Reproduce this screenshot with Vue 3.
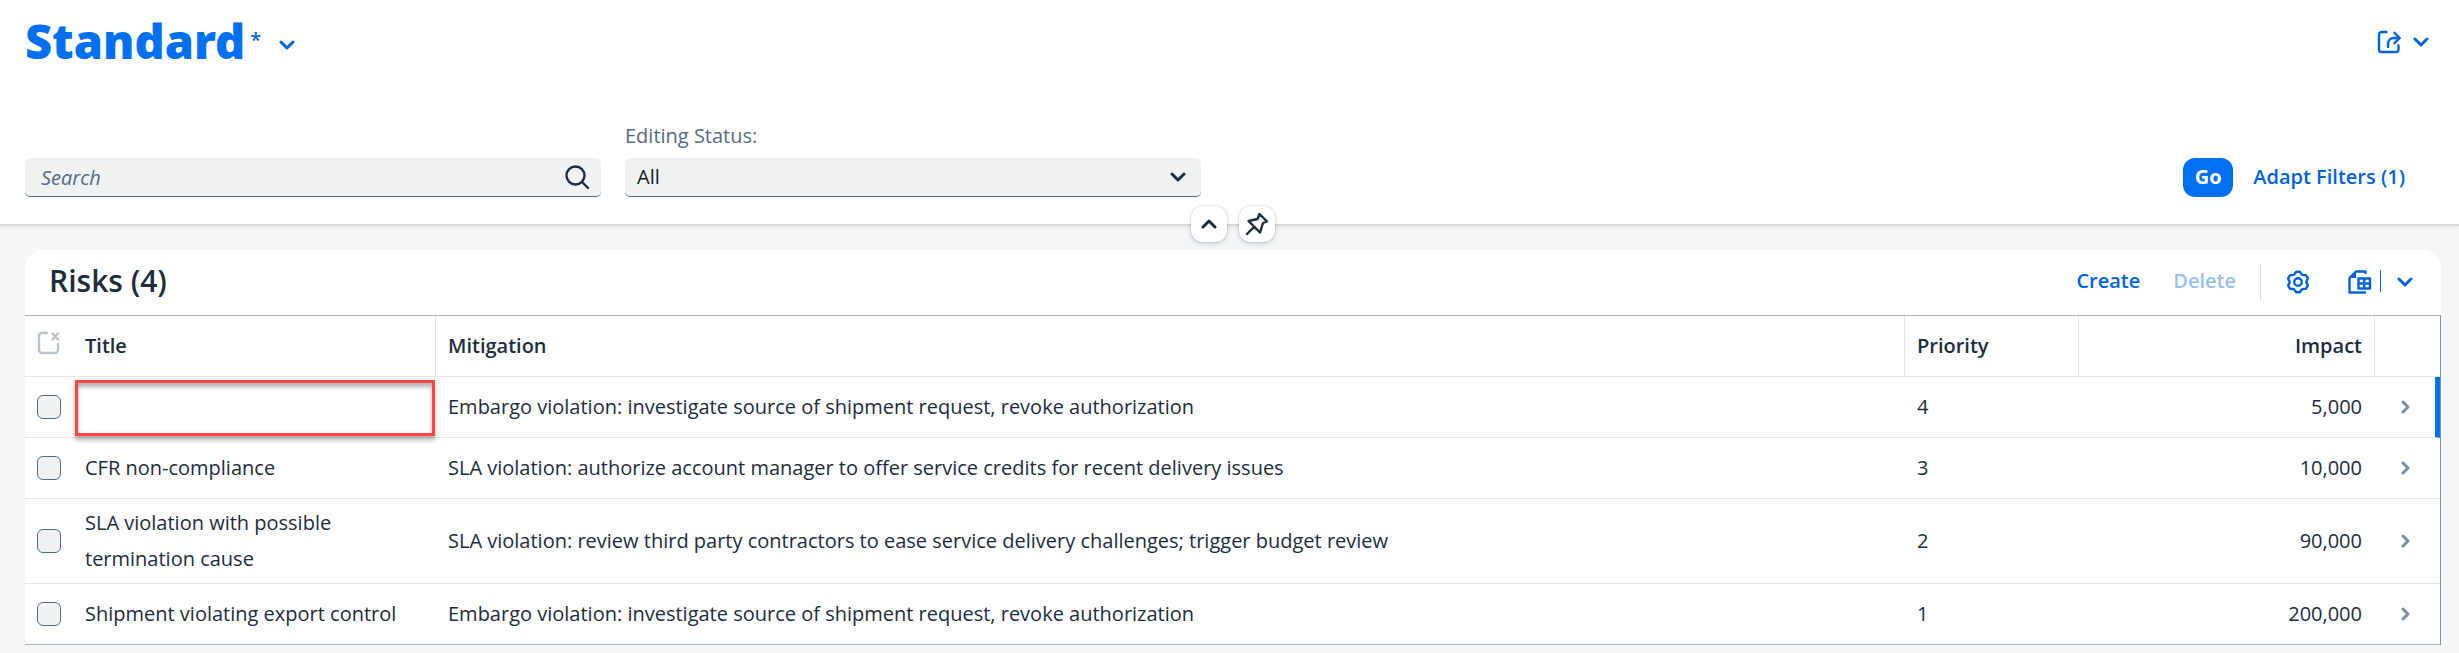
<script setup>
import { ref } from 'vue'

const search = ref('')
const status = ref('All')
const risks = ref([
  { id: 1, title: '', mitigation: 'Embargo violation: investigate source of shipment request, revoke authorization', priority: 4, impact: '5,000', invalid: true, current: true, selected: false },
  { id: 2, title: 'CFR non-compliance', mitigation: 'SLA violation: authorize account manager to offer service credits for recent delivery issues', priority: 3, impact: '10,000', selected: false },
  { id: 3, title: 'SLA violation with possible termination cause', mitigation: 'SLA violation: review third party contractors to ease service delivery challenges; trigger budget review', priority: 2, impact: '90,000', selected: false },
  { id: 4, title: 'Shipment violating export control', mitigation: 'Embargo violation: investigate source of shipment request, revoke authorization', priority: 1, impact: '200,000', selected: false },
])
</script>

<template>
  <div class="page">
    <header class="header">
      <div class="title-row">
        <div class="variant">
          <h1>Standard</h1>
          <span class="dirty">*</span>
          <button class="icon-btn variant-btn" aria-label="Select view">
            <svg width="16" height="10" viewBox="0 0 16 10"><path class="stroke bold" d="M2 2l6 6 6-6" /></svg>
          </button>
        </div>
        <div class="share">
          <button class="icon-btn" aria-label="Share">
            <svg width="24" height="24" viewBox="0 0 24 24">
              <path class="stroke" d="M9.500 2H4.500a2.500 2.500 0 0 0-2.500 2.500v15a2.500 2.500 0 0 0 2.500 2.500h14.500a2.500 2.500 0 0 0 2.500-2.500v-4" />
              <path class="stroke" d="M11 17v-3c0-3.500 2.500-6 6-6h5M17.500 2.800L22.700 8l-5.200 5.200" />
            </svg>
          </button>
          <button class="icon-btn" aria-label="More sharing options">
            <svg width="16" height="10" viewBox="0 0 16 10"><path class="stroke bold" d="M2 2l6 6 6-6" /></svg>
          </button>
        </div>
      </div>

      <form class="filters" @submit.prevent>
        <div class="field">
          <div class="control">
            <input v-model="search" type="text" placeholder="Search" aria-label="Search" />
            <button class="icon-btn dark" type="button" aria-label="Run search">
              <svg width="26" height="26" viewBox="0 0 26 26"><circle class="stroke" cx="11.500" cy="11.500" r="9" /><path class="stroke" d="M18 18l6 6" /></svg>
            </button>
          </div>
        </div>
        <div class="field">
          <label for="status">Editing Status:</label>
          <div class="control">
            <select id="status" v-model="status"><option>All</option></select>
            <svg class="dark select-arrow" width="16" height="10" viewBox="0 0 16 10"><path class="stroke bold" d="M2 2l6 6 6-6" /></svg>
          </div>
        </div>
        <div class="actions">
          <button class="go" type="submit">Go</button>
          <button class="text-btn" type="button">Adapt Filters (1)</button>
        </div>
      </form>

      <div class="toggles">
        <button class="toggle" aria-label="Collapse header">
          <svg width="16" height="10" viewBox="0 0 16 10"><path class="stroke bold" d="M2 8l6-6 6 6" /></svg>
        </button>
        <button class="toggle" aria-label="Pin header">
          <svg width="24" height="24" viewBox="0 0 24 24"><path class="stroke" d="M14.500 2l7.500 7.500-4 1.500-3 9.500L3.500 9l9-2zM9 15l-7 7" /></svg>
        </button>
      </div>
    </header>

    <main class="card">
      <div class="toolbar">
        <h2>Risks (4)</h2>
        <button class="text-btn create">Create</button>
        <button class="text-btn delete" disabled>Delete</button>
        <span class="divider"></span>
        <button class="icon-btn settings" aria-label="Settings">
          <svg width="24" height="24" viewBox="0 0 24 24">
            <path class="stroke" d="M10.200 1.700h3.600l2.300 3.200 3.900.4 1.900 3.100-1.700 3.600 1.700 3.600-1.900 3.100-3.900.4-2.300 3.200h-3.600l-2.300-3.200-3.900-.4-1.900-3.100 1.700-3.600-1.700-3.600 1.900-3.100 3.900-.4z" />
            <circle class="stroke" cx="12" cy="12" r="3.800" />
          </svg>
        </button>
        <button class="icon-btn" aria-label="Export to spreadsheet">
          <svg width="24" height="24" viewBox="0 0 24 24">
            <path class="stroke" d="M17.500 3V1.500H8L1.500 8v14.500H17" />
            <path class="fill" d="M8 1v7H1z" />
            <path class="stroke" d="M10.500 8.500h11.500v10h-11.500zM16.200 8.500v10M10.500 13.500h11.500" />
          </svg>
        </button>
        <span class="split"></span>
        <button class="icon-btn" aria-label="Export options">
          <svg width="16" height="10" viewBox="0 0 16 10"><path class="stroke bold" d="M2 2l6 6 6-6" /></svg>
        </button>
      </div>

      <table>
        <colgroup>
          <col class="c-check" /><col class="c-title" /><col /><col class="c-priority" /><col class="c-impact" /><col class="c-nav" />
        </colgroup>
        <thead>
          <tr>
            <th class="check">
              <button class="icon-btn clear" aria-label="Deselect all">
                <svg width="24" height="24" viewBox="0 0 24 24"><path class="stroke" d="M10 2H5a3 3 0 0 0-3 3v14a3 3 0 0 0 3 3h13a3 3 0 0 0 3-3v-6M15.500 2.500l5.500 6M21 2.500l-5.500 6" /></svg>
              </button>
            </th>
            <th class="sep">Title</th>
            <th class="sep">Mitigation</th>
            <th class="sep">Priority</th>
            <th class="sep num">Impact</th>
            <th></th>
          </tr>
        </thead>
        <tbody>
          <tr v-for="r in risks" :key="r.id">
            <td class="check"><input v-model="r.selected" type="checkbox" :aria-label="'Select row ' + r.id" /></td>
            <td class="title-cell">{{ r.title }}<span v-if="r.invalid" class="marker"></span></td>
            <td>{{ r.mitigation }}</td>
            <td>{{ r.priority }}</td>
            <td class="num">{{ r.impact }}</td>
            <td class="nav" :class="{ current: r.current }">
              <button class="icon-btn go-to" :aria-label="'Open row ' + r.id">
                <svg width="10" height="14" viewBox="0 0 10 14"><path class="stroke bold" d="M2 2l5 5-5 5" /></svg>
              </button>
            </td>
          </tr>
        </tbody>
      </table>
    </main>
  </div>
</template>

<style>
body {
  background: #f5f6f7;
}
</style>

<style scoped>
.page {
  font-family: "Open Sans", "Noto Sans", sans-serif;
  font-size: 20px;
  line-height: 24px;
  color: #1d2d3e;
}
button, input, select {
  font: inherit;
  color: inherit;
  margin: 0;
}
button {
  border: 0;
  padding: 0;
  background: none;
}
svg {
  display: block;
}
.stroke {
  fill: none;
  stroke: currentColor;
  stroke-width: 2.4;
  stroke-linecap: round;
  stroke-linejoin: round;
}
.stroke.bold {
  stroke-width: 3;
}
.fill {
  fill: currentColor;
}
.icon-btn {
  color: #0064d9;
}
.dark {
  color: #1d2d3e;
}

.header {
  position: relative;
  background: #fff;
  padding: 14px 18px 27px 25px;
  border-bottom: 2px solid #d9dadc;
  box-shadow: 0 2px 4px rgba(34, 53, 72, 0.06);
}
.title-row {
  display: flex;
  justify-content: space-between;
  height: 56px;
}
.variant {
  display: flex;
}
h1 {
  margin: 0;
  font-family: "Noto Sans", "Open Sans", sans-serif;
  font-size: 47px;
  font-weight: 900;
  line-height: 54px;
  color: #0070f2;
}
.dirty {
  margin-left: 5px;
  line-height: 52px;
  font-weight: 600;
  color: #0064d9;
}
.variant-btn {
  margin: 6px 0 0 18px;
}
.share {
  display: flex;
  align-items: center;
  gap: 12px;
  padding-right: 12px;
  height: 56px;
}
.filters {
  display: flex;
  align-items: flex-end;
  gap: 24px;
  margin-top: 54px;
}
.field {
  flex: 0 1 576px;
}
.field label {
  display: block;
  color: #556b82;
  margin-bottom: 10px;
}
.control {
  display: flex;
  align-items: center;
  height: 39px;
  box-sizing: border-box;
  background: #eff1f2;
  border-bottom: 1px solid #556b82;
  border-radius: 5px;
  padding-right: 11px;
}
.control input {
  flex: 1;
  min-width: 0;
  height: 36px;
  padding: 0 16px;
  border: 0;
  background: none;
}
.control input::placeholder {
  color: #556b82;
  font-style: italic;
  opacity: 1;
}
.control select {
  flex: 1;
  height: 36px;
  padding: 0 12px;
  border: 0;
  background: none;
  appearance: none;
  color: #131e29;
}
.select-arrow {
  margin-right: 4px;
}
.actions {
  display: flex;
  align-items: center;
  gap: 20px;
  margin-left: auto;
  padding-right: 36px;
  height: 39px;
}
.go {
  width: 50px;
  height: 39px;
  padding-bottom: 2px;
  border-radius: 12px;
  background: #0070f2;
  color: #fff;
  font-weight: 700;
}
.text-btn {
  padding-bottom: 2px;
  color: #0064d9;
  font-weight: 600;
}
.toggles {
  position: absolute;
  left: 25px;
  right: 18px;
  bottom: -18px;
  display: flex;
  justify-content: center;
  gap: 12px;
}
.toggle {
  display: flex;
  align-items: center;
  justify-content: center;
  width: 36px;
  height: 36px;
  border-radius: 12px;
  background: #fff;
  box-shadow: 0 0 2px rgba(34, 53, 72, 0.25), 0 2px 5px rgba(34, 53, 72, 0.18);
}

.card {
  margin: 24px 18px 7px 25px;
  background: #fff;
  border-radius: 18px 18px 0 0;
}
.toolbar {
  display: flex;
  align-items: center;
  height: 65px;
  box-sizing: border-box;
  padding: 0 28px 1px 24px;
}
h2 {
  margin: 0 auto 0 0;
  padding-bottom: 2px;
  font-size: 30px;
  font-weight: 600;
  line-height: 36px;
}
.create {
  margin-right: 33px;
}
.delete {
  opacity: 0.4;
}
.divider {
  width: 1px;
  height: 36px;
  margin: 0 25px 0 24px;
  background: #d9d9d9;
}
.settings {
  margin-right: 38px;
}
.split {
  width: 1px;
  height: 22px;
  margin: 0 16px 2px 8px;
  background: #0064d9;
}

table {
  width: 100%;
  table-layout: fixed;
  border-collapse: separate;
  border-spacing: 0;
  border-top: 1px solid #a8b3bd;
  border-right: 1px solid #8c8f92;
}
.c-check { width: 48px; }
.c-title { width: 363px; }
.c-priority { width: 174px; }
.c-impact { width: 296px; }
.c-nav { width: 65px; }
th, td {
  height: 61px;
  box-sizing: border-box;
  padding: 6px 12px;
  border-bottom: 1px solid #e5e5e5;
  text-align: left;
  vertical-align: middle;
  line-height: 36px;
}
tbody tr:last-child td {
  border-bottom-color: #a8b3bd;
}
th {
  font-weight: 600;
}
.sep {
  border-right: 1px solid #e5e5e5;
}
th.num {
  text-align: right;
}
td.num {
  text-align: right;
  padding-right: 13px;
}
.check {
  padding: 0 0 0 12px;
}
.clear {
  display: block;
  color: #bcc3ca;
  margin-bottom: 6px;
}
.check input {
  appearance: none;
  display: block;
  width: 24px;
  height: 24px;
  border: 1px solid #556b82;
  border-radius: 6px;
  background: #eff1f2;
}
.title-cell {
  position: relative;
}
.marker {
  position: absolute;
  inset: 3px 1px 1px 2px;
  border: 3px solid #ff4444;
  box-shadow: 0 4px 4px rgba(0, 0, 0, 0.3), inset 0 4px 4px rgba(0, 0, 0, 0.3);
}
.nav {
  padding: 0 0 0 26px;
}
.nav.current {
  border-right: 5px solid #0070f2;
}
.go-to {
  display: block;
  color: #788fa6;
}
</style>
